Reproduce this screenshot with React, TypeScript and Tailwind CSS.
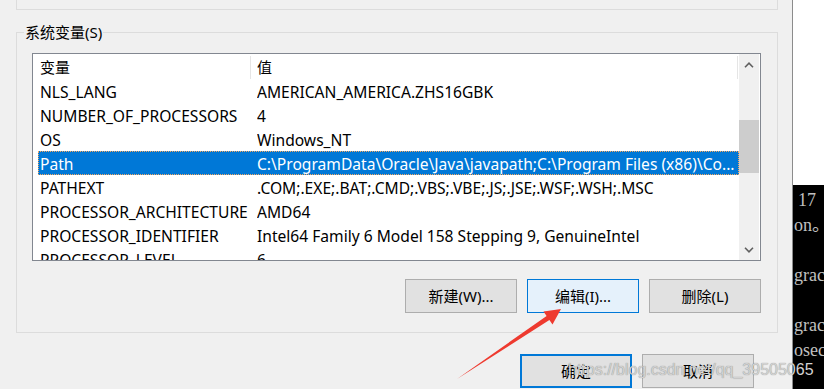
import React from 'react';

const rows: [string, string][] = [
  ['NLS_LANG', 'AMERICAN_AMERICA.ZHS16GBK'],
  ['NUMBER_OF_PROCESSORS', '4'],
  ['OS', 'Windows_NT'],
  ['Path', 'C:\\ProgramData\\Oracle\\Java\\javapath;C:\\Program Files (x86)\\Co...'],
  ['PATHEXT', '.COM;.EXE;.BAT;.CMD;.VBS;.VBE;.JS;.JSE;.WSF;.WSH;.MSC'],
  ['PROCESSOR_ARCHITECTURE', 'AMD64'],
  ['PROCESSOR_IDENTIFIER', 'Intel64 Family 6 Model 158 Stepping 9, GenuineIntel'],
  ['PROCESSOR_LEVEL', '6'],
];

const termLines = ['17', 'on\u3002', '', 'grac', '', 'grac', 'osec', ''];

const Chevron = ({ up }: { up: boolean }) => (
  <svg width="10" height="6" viewBox="0 0 10 6">
    <path
      d={up ? 'M1 5.2 L5 1.2 L9 5.2' : 'M1 0.8 L5 4.8 L9 0.8'}
      fill="none"
      stroke="#606060"
      strokeWidth="1.6"
    />
  </svg>
);

const WinButton = ({ label, variant }: { label: string; variant?: 'hover' | 'default' }) => {
  let cls = 'border border-[#adadad] bg-[#e1e1e1]';
  if (variant === 'hover') cls = 'border border-[#0078d7] bg-[#e5f1fb]';
  if (variant === 'default') cls = 'border-2 border-[#0078d7] bg-[#e1e1e1]';
  return (
    <div className={`w-[112px] h-[34px] flex items-center justify-center text-[15px] text-black ${cls}`}>
      {label}
    </div>
  );
};

export default function App() {
  return (
    <div className="relative flex w-[824px] h-[389px] overflow-hidden font-['Noto_Sans','Noto_Sans_CJK_SC',sans-serif]">
      {/* dialog */}
      <div className="w-[793px] h-full shrink-0 bg-[#f0f0f0] border-r border-[#8c8c8c] flex flex-col">
        {/* end of user variables group */}
        <div className="ml-[16px] w-[762px] h-[10px] border-x border-b border-[#dcdcdc]" />

        <fieldset className="ml-[16px] mt-[12px] w-[762px] border border-[#dcdcdc] pl-[15px] pr-[16px] pb-[19px]">
          <legend className="-ml-[8px] px-[1px] text-[15px] leading-[20px] text-black">系统变量(S)</legend>

          {/* list view */}
          <div className="mt-[11px] w-[729px] h-[208px] border border-[#828790] bg-white flex">
            <div className="w-[706px] flex flex-col overflow-hidden text-[15.6px] text-black">
              <div className="h-[25px] shrink-0 flex items-center text-[15px] pt-[2px]">
                <div className="w-[218px] h-full pl-[7px] flex items-center border-r border-[#e5e5e5]">变量</div>
                <div className="w-[487px] h-full pl-[6px] flex items-center border-r border-[#e5e5e5]">值</div>
              </div>
              {rows.map(([name, value]) => {
                const sel = name === 'Path';
                return (
                  <div
                    key={name}
                    className={`ml-[5px] w-[701px] h-[24px] shrink-0 flex items-center whitespace-nowrap pt-[3px] ${
                      sel
                        ? 'bg-[#0078d7] text-white outline-1 outline-dotted outline-[#f5a860] -outline-offset-1'
                        : ''
                    }`}
                  >
                    <div className="w-[219px] pl-[2px] overflow-hidden">{name}</div>
                    <div className="flex-1 overflow-hidden">{value}</div>
                  </div>
                );
              })}
            </div>

            {/* scrollbar */}
            <div className="w-[20px] bg-[#f0f0f0] flex flex-col">
              <div className="h-[21px] flex items-center justify-center">
                <Chevron up />
              </div>
              <div className="h-[45px]" />
              <div className="h-[53px] bg-[#cdcdcd]" />
              <div className="flex-1" />
              <div className="h-[21px] flex items-center justify-center">
                <Chevron up={false} />
              </div>
            </div>
            <div className="w-[1px]" />
          </div>

          <div className="mt-[18px] flex justify-end gap-[10px]">
            <WinButton label="新建(W)..." />
            <WinButton label="编辑(I)..." variant="hover" />
            <WinButton label="删除(L)" />
          </div>
        </fieldset>

        <div className="mt-[21px] flex justify-end gap-[10px] pr-[38px]">
          <WinButton label="确定" variant="default" />
          <WinButton label="取消" />
        </div>
      </div>

      {/* console behind */}
      <div className="flex-1 flex flex-col">
        <div className="h-[185px] bg-white" />
        <div className="flex-1 bg-black pt-[3px] font-['Liberation_Serif','Noto_Sans_CJK_SC',serif] text-[18px] leading-[25px] text-[#c0c0c0] whitespace-pre overflow-hidden">
          {termLines.map((l, i) => (
            <div key={i} className={i === 0 ? 'pl-[5px] h-[25px]' : 'pl-[1px] h-[25px]'}>
              {l}
            </div>
          ))}
        </div>
      </div>

      {/* annotation arrow */}
      <svg className="absolute left-0 top-0 pointer-events-none" width="824" height="389">
        <polygon
          points="561,309 552.5,324.6 549.4,320.1 457,379 546.6,315.9 543.5,311.4"
          fill="#ee3a2f"
        />
      </svg>

      {/* watermark */}
      <div className="absolute left-[568px] top-[360px] text-[16px] leading-[20px] font-['Liberation_Sans',sans-serif] text-[#d2d2d2] [text-shadow:0_0_1px_rgba(0,0,0,0.45)] whitespace-nowrap pointer-events-none">
        https://blog.csdn.net/qq_39505065
      </div>
    </div>
  );
}
